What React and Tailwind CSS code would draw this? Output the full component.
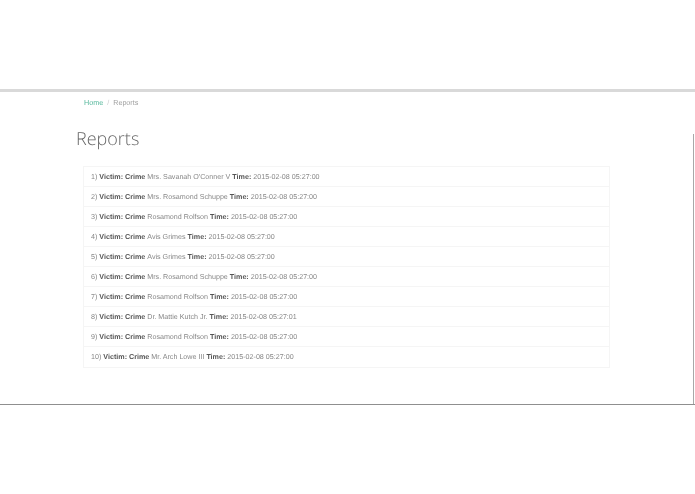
const reports = [
  { name: "Mrs. Savanah O'Conner V", time: "2015-02-08 05:27:00" },
  { name: "Mrs. Rosamond Schuppe", time: "2015-02-08 05:27:00" },
  { name: "Rosamond Rolfson", time: "2015-02-08 05:27:00" },
  { name: "Avis Grimes", time: "2015-02-08 05:27:00" },
  { name: "Avis Grimes", time: "2015-02-08 05:27:00" },
  { name: "Mrs. Rosamond Schuppe", time: "2015-02-08 05:27:00" },
  { name: "Rosamond Rolfson", time: "2015-02-08 05:27:00" },
  { name: "Dr. Mattie Kutch Jr.", time: "2015-02-08 05:27:01" },
  { name: "Rosamond Rolfson", time: "2015-02-08 05:27:00" },
  { name: "Mr. Arch Lowe III", time: "2015-02-08 05:27:00" },
];

export default function App() {
  return (
    <div className="h-[494px] overflow-hidden bg-white font-['Liberation_Sans',Arial,sans-serif] antialiased [text-rendering:geometricPrecision]">
      <div className="h-[89px]" />
      <main className="relative h-[316px] border-t-[3px] border-b border-t-[#d9d9d9] border-b-[#8f8f8f]">
        <div className="absolute right-[1px] top-[42px] bottom-0 w-px bg-[#a8a8a8]" />
        <nav className="flex pl-[84px] pt-[4px] text-[7.2px] leading-[13px] [will-change:opacity]">
          <a className="text-[#55b79b]">Home</a>
          <span className="px-[4px] text-[#ccc]">/</span>
          <span className="text-[#a0a0a0]">Reports</span>
        </nav>
        <h1 className="mt-[17px] pl-[76px] font-['Open_Sans',sans-serif] text-[18px] leading-[26px] font-light text-[#666] [will-change:opacity]">
          Reports
        </h1>
        <ul className="mt-[14px] ml-[83px] w-[527px] border border-[#f5f5f5] [will-change:opacity]">
          {reports.map((r, i) => (
            <li key={i} className="flex h-[20px] items-center border-b border-[#f5f5f5] pl-[7px] pt-px text-[7.15px] whitespace-pre text-[#888] last:border-0">
              <span>{i + 1}) </span>
              <b className="text-[#555]">Victim: Crime </b>
              <span>{r.name} </span>
              <b className="text-[#555]">Time: </b>
              <span>{r.time}</span>
            </li>
          ))}
        </ul>
      </main>
    </div>
  );
}
